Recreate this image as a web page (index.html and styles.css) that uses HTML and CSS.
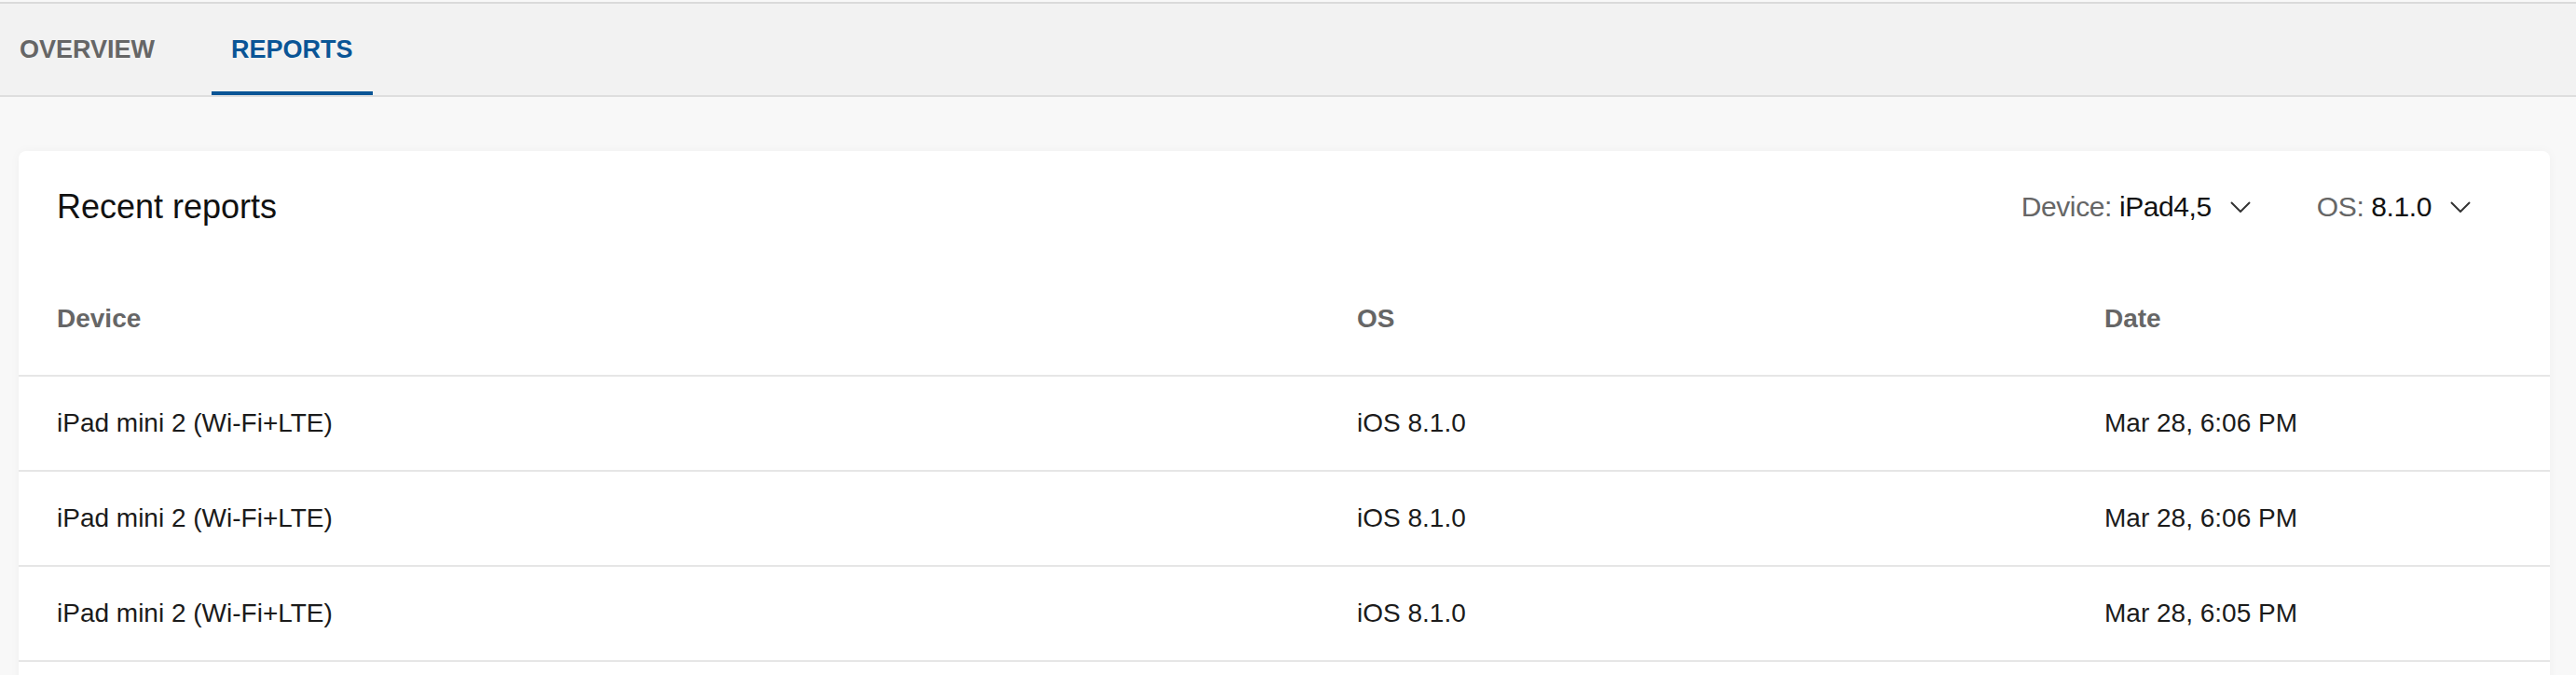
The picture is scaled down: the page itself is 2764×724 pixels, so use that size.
FILE: index.html
```html
<!DOCTYPE html>
<html lang="en">
<head>
<meta charset="utf-8">
<title>Reports</title>
<link rel="stylesheet" href="styles.css">
</head>
<body>
<nav class="tabs">
  <a class="tab">OVERVIEW</a>
  <a class="tab active">REPORTS</a>
</nav>
<main class="content">
  <section class="card">
    <header class="card-head">
      <h2 class="card-title">Recent reports</h2>
      <div class="filters">
        <button class="filter"><span class="filter-text"><span class="filter-label">Device:</span> <span class="filter-value">iPad4,5</span></span>
          <svg class="chev" width="22" height="12" viewBox="0 0 22 12"><polyline points="1,1 11,11 21,1" fill="none" stroke="#333" stroke-width="2"/></svg>
        </button>
        <button class="filter"><span class="filter-text"><span class="filter-label">OS:</span> <span class="filter-value">8.1.0</span></span>
          <svg class="chev" width="22" height="12" viewBox="0 0 22 12"><polyline points="1,1 11,11 21,1" fill="none" stroke="#333" stroke-width="2"/></svg>
        </button>
      </div>
    </header>
    <div class="table">
      <div class="row head">
        <div class="cell">Device</div>
        <div class="cell">OS</div>
        <div class="cell">Date</div>
      </div>
      <div class="row">
        <div class="cell">iPad mini 2 (Wi-Fi+LTE)</div>
        <div class="cell">iOS 8.1.0</div>
        <div class="cell">Mar 28, 6:06 PM</div>
      </div>
      <div class="row">
        <div class="cell">iPad mini 2 (Wi-Fi+LTE)</div>
        <div class="cell">iOS 8.1.0</div>
        <div class="cell">Mar 28, 6:06 PM</div>
      </div>
      <div class="row">
        <div class="cell">iPad mini 2 (Wi-Fi+LTE)</div>
        <div class="cell">iOS 8.1.0</div>
        <div class="cell">Mar 28, 6:05 PM</div>
      </div>
    </div>
  </section>
</main>
</body>
</html>
```

FILE: styles.css
```css
html, body {
  margin: 0;
  padding: 0;
}
body {
  background: #f8f8f8;
  font-family: "Liberation Sans", Arial, sans-serif;
  color: #1b1b1b;
  overflow: hidden;
  padding-top: 2px;
}
.tabs {
  display: flex;
  gap: 40px;
  height: 98px;
  background: #f2f2f2;
  border-top: 2px solid #dadada;
  border-bottom: 2px solid #dedede;
}
.tab {
  box-sizing: border-box;
  height: 98px;
  display: flex;
  align-items: center;
  padding: 4px 21px 0;
  border-bottom: 4px solid transparent;
  font-size: 27px;
  font-weight: 700;
  color: #666;
}
.tab.active {
  color: #0a5596;
  border-bottom-color: #0a5596;
}
.content {
  padding: 58px 28px 0 20px;
}
.card {
  background: #fff;
  border-radius: 8px 8px 0 0;
  box-shadow: 0 0 12px rgba(0, 0, 0, 0.035);
  padding-bottom: 40px;
}
.card-head {
  height: 120px;
  display: flex;
  align-items: center;
  justify-content: space-between;
  padding: 0 85px 0 41px;
}
.card-title {
  margin: 0;
  font-size: 36px;
  font-weight: 400;
  color: #111;
}
.filters {
  display: flex;
  gap: 71px;
}
.filter {
  display: flex;
  align-items: center;
  gap: 20px;
  border: 0;
  background: none;
  padding: 0;
  font-family: inherit;
  font-size: 30px;
  letter-spacing: -0.4px;
  color: #111;
}
.filter-label {
  color: #666;
}
.chev {
  display: block;
}
.row {
  display: grid;
  grid-template-columns: 1395px 802px 1fr;
  align-items: center;
  height: 102px;
  box-sizing: border-box;
  border-bottom: 2px solid #e6e6e6;
  font-size: 28px;
}
.row.head {
  height: 122px;
  font-weight: 700;
  color: #666;
}
.cell {
  padding-left: 41px;
}
```
